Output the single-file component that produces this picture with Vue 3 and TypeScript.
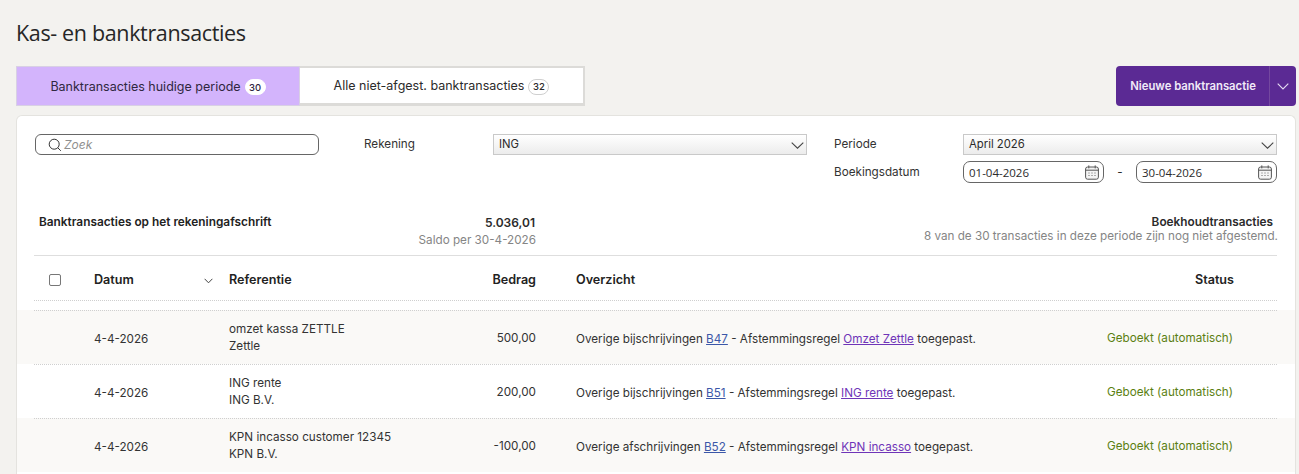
<script setup lang="ts">
interface Row {
  date: string
  ref1: string
  ref2: string
  amount: string
  kind: string
  doc: string
  rule: string
}
const rows: Row[] = [
  { date: '4-4-2026', ref1: 'omzet kassa ZETTLE', ref2: 'Zettle', amount: '500,00', kind: 'Overige bijschrijvingen', doc: 'B47', rule: 'Omzet Zettle' },
  { date: '4-4-2026', ref1: 'ING rente', ref2: 'ING B.V.', amount: '200,00', kind: 'Overige bijschrijvingen', doc: 'B51', rule: 'ING rente' },
  { date: '4-4-2026', ref1: 'KPN incasso customer 12345', ref2: 'KPN B.V.', amount: '-100,00', kind: 'Overige afschrijvingen', doc: 'B52', rule: 'KPN incasso' },
]
const dates = ['01-04-2026', '30-04-2026']
</script>

<template>
  <div class="page">
    <h1 class="title">Kas- en banktransacties</h1>
    <div class="top">
      <div class="tabs">
        <div class="tab active">Banktransacties huidige periode <span class="badge solid">30</span></div>
        <div class="tab">Alle niet-afgest. banktransacties <span class="badge">32</span></div>
      </div>
      <div class="cta">
        <span class="cta-label">Nieuwe banktransactie</span>
        <span class="cta-arrow">
          <svg width="12" height="7" viewBox="0 0 12 7"><path d="M.7.7 6 6l5.3-5.3" fill="none" stroke="#e6dcf2" stroke-width="1.1" /></svg>
        </span>
      </div>
    </div>

    <section class="card">
      <div class="filters">
        <div class="search">
          <svg width="14" height="14" viewBox="0 0 14 14"><circle cx="6.2" cy="6.2" r="5" fill="none" stroke="#333" stroke-width="1" /><path d="m9.8 9.8 3 3" stroke="#333" stroke-width="1" /></svg>
          <span class="placeholder">Zoek</span>
        </div>
        <div class="label rek">Rekening</div>
        <div class="select rek-sel">
          ING
          <svg class="sel-arrow" width="13" height="7" viewBox="0 0 13 7"><path d="M.7.7 6.5 6.2 12.3.7" fill="none" stroke="#444" stroke-width="1.1" /></svg>
        </div>
        <div class="period">
          <div class="label">Periode</div>
          <div class="select">
            April 2026
            <svg class="sel-arrow" width="13" height="7" viewBox="0 0 13 7"><path d="M.7.7 6.5 6.2 12.3.7" fill="none" stroke="#444" stroke-width="1.1" /></svg>
          </div>
          <div class="label label-date">Boekingsdatum</div>
          <div class="dates">
            <template v-for="(d, i) in dates" :key="d">
              <span v-if="i === 1" class="dash">-</span>
              <div class="date">
                <span>{{ d }}</span>
                <svg width="14" height="15" viewBox="0 0 14 15">
                  <rect x=".6" y="2" width="12.8" height="12.2" rx="2" fill="#f4f4f4" stroke="#555" />
                  <path d="M.6 5.2h12.8" stroke="#555" />
                  <path d="M3.8.4v3M10.2.4v3" stroke="#555" />
                  <path d="M3.5 8h1M6.5 8h1M9.5 8h1M3.5 10.5h1M6.5 10.5h1M9.5 10.5h1" stroke="#666" />
                </svg>
              </div>
            </template>
          </div>
        </div>
      </div>

      <div class="summary">
        <div class="sum-title">Banktransacties op het rekeningafschrift</div>
        <div class="sum-amount">
          <strong>5.036,01</strong>
          <span>Saldo per 30-4-2026</span>
        </div>
        <div class="sum-right">
          <strong>Boekhoudtransacties</strong>
          <span>8 van de 30 transacties in deze periode zijn nog niet afgestemd.</span>
        </div>
      </div>

      <div class="grid head">
        <div class="check-cell"><span class="check"></span></div>
        <div class="date-head">
          Datum
          <svg width="9" height="6" viewBox="0 0 9 6"><path d="M.6.8 4.5 4.8 8.4.8" fill="none" stroke="#444" /></svg>
        </div>
        <div>Referentie</div>
        <div class="num">Bedrag</div>
        <div class="over">Overzicht</div>
        <div class="status-head">Status</div>
      </div>
      <div class="spacer"></div>

      <div v-for="(r, i) in rows" :key="r.doc" class="row" :class="{ odd: i % 2 === 0 }">
        <div class="grid body">
          <div></div>
          <div class="cell-date">{{ r.date }}</div>
          <div class="ref"><div>{{ r.ref1 }}</div><div>{{ r.ref2 }}</div></div>
          <div class="num">{{ r.amount }}</div>
          <div class="over text-over">{{ r.kind }} <a class="doc">{{ r.doc }}</a> - Afstemmingsregel <a class="rule">{{ r.rule }}</a> toegepast.</div>
          <div class="status">Geboekt (automatisch)</div>
        </div>
      </div>
    </section>
  </div>
</template>

<style>
html, body {
  margin: 0;
  background: #f3f2ef;
  overflow: hidden;
}
</style>

<style scoped>
.page {
  width: 1299px;
  height: 474px;
  box-sizing: border-box;
  padding: 0 3px 0 16px;
  font-family: Inter, "Liberation Sans", sans-serif;
  font-size: 11.7px;
  color: #2b2b2b;
  overflow: hidden;
}
.title {
  margin: 0;
  padding-top: 18px;
  height: 66px;
  box-sizing: border-box;
  font-family: "Open Sans", sans-serif;
  font-weight: 400;
  font-size: 21.5px;
  line-height: 30px;
  letter-spacing: -0.35px;
  color: #262626;
}
.top {
  display: flex;
  justify-content: space-between;
  margin-bottom: 9px;
}
.tabs {
  display: flex;
  height: 40px;
}
.tab {
  box-sizing: border-box;
  height: 40px;
  width: 285px;
  display: flex;
  align-items: center;
  justify-content: center;
  gap: 4px;
  font-size: 12.5px;
  background: #fff;
  border: 2px solid #dcdbd8;
  border-left-width: 0;
  border-bottom-width: 3px;
}
.tab.active {
  width: 284px;
  background: #d3b4fc;
  border: 1px solid #d8d0e4;
  color: #2f2740;
}
.badge {
  box-sizing: border-box;
  display: inline-flex;
  align-items: center;
  justify-content: center;
  width: 21px;
  height: 16px;
  margin-top: 2px;
  border-radius: 8px;
  border: 1px solid #cfcfcf;
  background: #fff;
  font-size: 9.5px;
  font-weight: 500;
}
.badge.solid {
  border-color: #fff;
}
.cta {
  width: 180px;
  height: 40px;
  display: flex;
  align-items: center;
  background: #5b2a94;
  border-radius: 4px;
  color: #f1eaf9;
  font-weight: 600;
  font-size: 11.3px;
}
.cta-label {
  flex: 1;
  text-align: center;
  padding-left: 1px;
}
.cta-arrow {
  width: 27px;
  height: 40px;
  display: flex;
  align-items: center;
  justify-content: center;
  border-left: 1px solid #74489f;
  box-sizing: border-box;
}
.card {
  background: #fff;
  border: 1px solid #e4e3df;
  border-bottom: 0;
  border-radius: 6px 6px 0 0;
  width: 1280px;
  box-sizing: border-box;
  height: 380px;
  overflow: hidden;
}
.filters {
  display: flex;
  align-items: flex-start;
  padding: 18px 0 0 18px;
  height: 70px;
  box-sizing: border-box;
}
.search {
  box-sizing: border-box;
  width: 284px;
  height: 21px;
  border: 1px solid #666;
  border-radius: 6px;
  display: flex;
  align-items: center;
  gap: 2px;
  padding-left: 12px;
}
.placeholder {
  font-style: italic;
  color: #8f8f8f;
  font-size: 12px;
}
.label {
  line-height: 21px;
  color: #333;
}
.label-date {
  padding-top: 1px;
}
.rek {
  width: 129px;
  margin-left: 45px;
}
.select {
  position: relative;
  box-sizing: border-box;
  height: 21px;
  line-height: 18px;
  border: 1px solid #c9c9c9;
  background: linear-gradient(#ffffff, #ececec);
  padding-left: 5px;
  font-size: 11.3px;
}
.rek-sel {
  width: 314px;
}
.sel-arrow {
  position: absolute;
  right: 2px;
  top: 7px;
}
.period {
  margin-left: 27px;
  display: grid;
  grid-template-columns: 129px 314px;
  row-gap: 6px;
}
.dates {
  display: flex;
  align-items: center;
}
.date {
  box-sizing: border-box;
  width: 141px;
  height: 22px;
  border: 1px solid #666;
  border-radius: 7px;
  display: flex;
  align-items: center;
  justify-content: space-between;
  padding: 0 4px 0 5px;
  font-family: "Open Sans", sans-serif;
  font-size: 11.5px;
}
.dash {
  width: 32px;
  text-align: center;
}
.summary {
  display: flex;
  margin: 0 18px 0 17px;
  height: 70px;
  padding-top: 28px;
  box-sizing: border-box;
  border-bottom: 1px solid #dedede;
}
.sum-title {
  width: 380px;
  padding: 1px 0 0 5px;
  box-sizing: border-box;
  font-weight: 600;
  font-size: 11.85px;
  line-height: 15px;
  color: #222;
}
.sum-amount {
  width: 122px;
  display: flex;
  flex-direction: column;
  align-items: flex-end;
  line-height: 18px;
}
.sum-amount strong {
  font-weight: 600;
  font-size: 12px;
  line-height: 17px;
  margin-right: 1px;
}
.sum-amount span,
.sum-right span {
  color: #858585;
}
.sum-right {
  flex: 1;
  display: flex;
  flex-direction: column;
  align-items: flex-end;
  line-height: 15px;
}
.sum-right strong {
  font-weight: 600;
  font-size: 11.8px;
  padding: 1px 4px 0 0;
}
.sum-right span {
  margin: -1px -1px 0 0;
}
.grid {
  display: grid;
  grid-template-columns: 60px 135px 147px 160px 571px 1fr;
  align-items: center;
  white-space: nowrap;
}
.num {
  text-align: right;
}
.over {
  padding-left: 40px;
}
.head {
  margin: 0 18px 0 17px;
  height: 45px;
  padding-top: 3px;
  font-weight: 600;
  font-size: 12.6px;
  color: #222;
  border-bottom: 1px dotted #cfcfcf;
  box-sizing: border-box;
}
.check-cell {
  padding-left: 15px;
  display: flex;
}
.check {
  width: 12px;
  height: 12px;
  box-sizing: border-box;
  border: 1px solid #777;
  border-radius: 2px;
}
.date-head {
  display: flex;
  justify-content: space-between;
  padding-right: 16px;
}
.date-head svg {
  margin-top: 6px;
}
.status-head {
  text-align: right;
  padding-right: 43px;
}
.spacer {
  height: 9px;
}
.row {
  height: 54px;
  padding: 0 18px 0 17px;
  box-sizing: border-box;
}
.row.odd {
  background: #faf9f7;
}
.body {
  height: 54px;
  box-sizing: border-box;
  border-top: 1px dotted #cfcfcf;
  color: #333;
}
.cell-date {
  padding-top: 2px;
}
.text-over {
  padding-top: 2px;
}
.ref {
  line-height: 17px;
}
.doc {
  color: #3b57a8;
  text-decoration: underline;
}
.rule {
  color: #6f35b8;
  text-decoration: underline;
}
.status {
  text-align: right;
  padding-right: 44px;
  color: #5b7f12;
}
</style>
